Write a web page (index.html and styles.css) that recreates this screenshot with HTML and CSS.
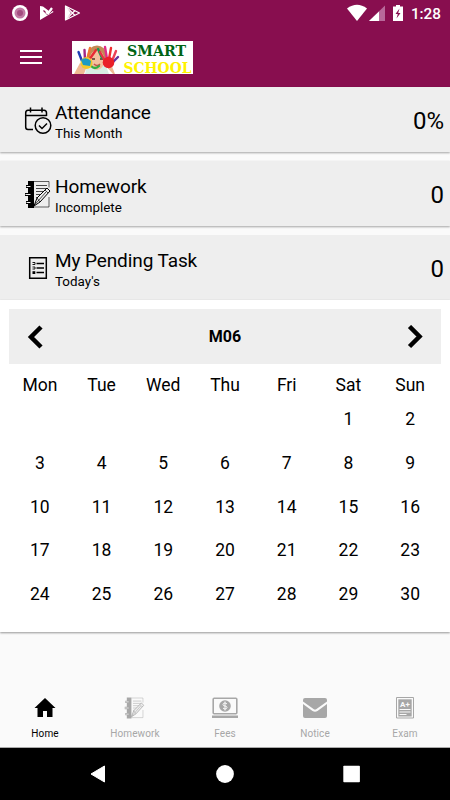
FILE: index.html
```html
<!DOCTYPE html>
<html lang="en">
<head>
    <meta charset="UTF-8">
    <meta name="viewport" content="width=device-width, initial-scale=1.0">
    <title>Smart School</title>
    <link rel="stylesheet" href="styles.css">
</head>
<body>
    <header class="app-header">
        <div class="status-bar">
            <svg class="status-left" width="70" height="18" viewBox="0 0 70 18">
                <circle cx="8" cy="9" r="8" fill="#fff"/>
                <circle cx="8" cy="9" r="5.500" fill="#c27ba5"/>
                <circle cx="8" cy="9" r="3" fill="#a34c80"/>
                <path d="M28 2l3 .5 6 4.500 2-3 2.500 4L28 16z" fill="#fff"/>
                <path d="M31.500 6.500l4 4L41 6" fill="none" stroke="#880e4f" stroke-width="1.200"/>
                <path d="M34 8l2 1.500L40 4" fill="none" stroke="#fff" stroke-width="2.200"/>
                <path d="M53.500 2v14L67.500 9z" fill="none" stroke="#fff" stroke-width="1.200" stroke-linejoin="round"/>
                <path d="M53.500 2v14l5.500-7z" fill="#fff"/>
                <path d="M54 2.500l9 9M54 15.500l9-9" stroke="#fff" stroke-width="1.200"/>
            </svg>
            <div class="status-right">
                <svg width="58" height="18" viewBox="0 0 58 18">
                    <path d="M0 4.500Q10 -3 20 4.500L10 17z" fill="#fff"/>
                    <path d="M22 17L38 1.500V17z" fill="#b8699a"/>
                    <path d="M22 17L32 7.500V17z" fill="#fff"/>
                    <path d="M46 2.500h3V1h4v1.500h3V17H46z" fill="#fff"/>
                    <path d="M52.500 4.500L48.500 10h2.300l-1.300 4.500 4-5.500h-2.300z" fill="#880e4f"/>
                </svg>
                <span class="clock">1:28</span>
            </div>
        </div>
        <div class="toolbar">
            <div class="menu-btn"><span></span><span></span><span></span></div>
            <svg class="logo" width="121" height="33" viewBox="0 0 121 33">
                <rect width="121" height="33" fill="#fff"/>
                <!-- child -->
                <path d="M13 33l2-8h19l3 8z" fill="#d8eee5"/>
                <ellipse cx="25" cy="14" rx="9.500" ry="9.500" fill="#c38a55"/>
                <ellipse cx="25" cy="19" rx="7.500" ry="10" fill="#f4c19f"/>
                <path d="M2 33l6-11 7 3-3 8zM41 33l-8-9 6-1 4 10z" fill="#efb993"/>
                <path d="M20 18h3M28 18h3" stroke="#533529" stroke-width="1.500"/>
                <path d="M22 23q3 3 6 0" fill="none" stroke="#c6504c" stroke-width="1.500"/>
                <!-- painted hands -->
                <g fill="none" stroke-width="2.400" stroke-linecap="round">
                    <path d="M10 20L6.500 11" stroke="#1f3eb4"/>
                    <path d="M13 19L12.500 9" stroke="#a12787"/>
                    <path d="M15 19l3-12" stroke="#f17631"/>
                    <path d="M17 19l7-10" stroke="#e92b35"/>
                    <path d="M26 8l4 9" stroke="#1a9651"/>
                    <path d="M33 20L28 11" stroke="#e73345"/>
                    <path d="M35 18L33 6" stroke="#e02c88"/>
                    <path d="M37 18l2-11" stroke="#f02d30"/>
                    <path d="M40 20l4-10" stroke="#ec4056"/>
                    <path d="M41 21l5-5" stroke="#65319d"/>
                    <path d="M19 25q4 4 8 0" stroke="#35ad43"/>
                </g>
                <circle cx="14.500" cy="22" r="6" fill="#f2c92b"/>
                <path d="M9 19q5-4 10 1l-1 5-7-1z" fill="#1b9bc4"/>
                <circle cx="36.500" cy="21.500" r="5.800" fill="#ea2029"/>
                <text class="logo-text green" x="55" y="14.500" textLength="59" lengthAdjust="spacingAndGlyphs">SMART</text>
                <text class="logo-text yellow" x="51.500" y="31.500" textLength="68" lengthAdjust="spacingAndGlyphs">SCHOOL</text>
            </svg>
        </div>
    </header>

    <!-- shared notebook icon -->
    <svg class="defs" width="0" height="0">
        <symbol id="notebook" viewBox="0 0 26 27">
            <path d="M3 0h6v27H3v-4H1v-3h2v-5H0v-3h3V7H1V4h2z" fill="currentColor"/>
            <path d="M1.500 5.500h4M.5 13.500h5M1.500 21.500h4" stroke="#eee" stroke-width="1"/>
            <path d="M9 .5h15v6M24 16v10H9" fill="none" stroke="currentColor" stroke-width=".6"/>
            <path d="M11 4.500h11M11 7.500h11M11 10.500h9M11 13.500h6M11 16.500h3" stroke="currentColor" stroke-width=".7"/>
            <path d="M9 25l3-8L22 7l3 3-10 11z" fill="#eee" stroke="currentColor" stroke-width="1"/>
            <path d="M12 17l3 4M20 9l3 3M9.500 24L21 11" stroke="currentColor" stroke-width=".7"/>
        </symbol>
    </svg>

    <main class="content">
        <section class="card">
            <svg class="card-icon" width="28" height="28" viewBox="0 0 28 28" fill="none" stroke="#000" stroke-width="1.500">
                <path d="M9 22.500H4Q1.700 22.500 1.700 20V6Q1.700 3.200 4 3.200H20Q22.500 3.200 22.500 6v3M1.700 8.500h21M6.500 .5v5M18 .5v5"/>
                <circle cx="19" cy="18.500" r="7.800"/>
                <path d="M15 18.500l3 3 5-5"/>
            </svg>
            <div class="card-text">
                <div class="card-title">Attendance</div>
                <div class="card-sub">This Month</div>
            </div>
            <div class="card-value">0%</div>
        </section>
        <section class="card">
            <svg class="card-icon" width="28" height="27"><use href="#notebook" x="1" width="26" height="27"/></svg>
            <div class="card-text">
                <div class="card-title">Homework</div>
                <div class="card-sub">Incomplete</div>
            </div>
            <div class="card-value">0</div>
        </section>
        <section class="card flat">
            <svg class="card-icon" width="28" height="24" viewBox="0 0 28 24">
                <path d="M5.700 .7h16.600v20.600H5.700z" fill="none" stroke="#000" stroke-width="1.500"/>
                <path d="M12.500 6.500H20M12.500 11H20M12.500 15.500H20" stroke="#000" stroke-width="1.300"/>
                <path d="M8.500 5.500h2.500v2H8.500M8.500 10H11v2H8.500" fill="none" stroke="#000" stroke-width=".9"/>
                <path d="M8.500 14.200H11.300V17H8.500z"/>
            </svg>
            <div class="card-text">
                <div class="card-title">My Pending Task</div>
                <div class="card-sub">Today's</div>
            </div>
            <div class="card-value">0</div>
        </section>

        <section class="calendar">
            <div class="month-bar">
                <svg width="16" height="24" viewBox="0 0 16 24"><path d="M14 2L4 12l10 10" fill="none" stroke="#000" stroke-width="4.500"/></svg>
                <span>M06</span>
                <svg width="16" height="24" viewBox="0 0 16 24"><path d="M2.500 1.500l10 10-10 10" fill="none" stroke="#000" stroke-width="4.500"/></svg>
            </div>
            <div class="weekdays">
                <span>Mon</span><span>Tue</span><span>Wed</span><span>Thu</span><span>Fri</span><span>Sat</span><span>Sun</span>
            </div>
            <div class="days">
                <span class="first">1</span><span>2</span>
                <span>3</span><span>4</span><span>5</span><span>6</span><span>7</span><span>8</span><span>9</span>
                <span>10</span><span>11</span><span>12</span><span>13</span><span>14</span><span>15</span><span>16</span>
                <span>17</span><span>18</span><span>19</span><span>20</span><span>21</span><span>22</span><span>23</span>
                <span>24</span><span>25</span><span>26</span><span>27</span><span>28</span><span>29</span><span>30</span>
            </div>
        </section>
    </main>

    <nav class="tabs">
        <div class="tab active">
            <svg width="26" height="24" viewBox="0 0 26 24"><path d="M13 2L2.500 12H5.500v9h5.500v-6h4v6h5.500v-9h3z" fill="currentColor"/></svg>
            <span>Home</span>
        </div>
        <div class="tab">
            <svg width="26" height="24"><use href="#notebook" x="2.500" y="1" width="20" height="22"/></svg>
            <span>Homework</span>
        </div>
        <div class="tab">
            <svg width="28" height="24" viewBox="0 0 28 24">
                <rect x="2.200" y="2.200" width="23.600" height="15.600" rx="1" fill="none" stroke="currentColor" stroke-width="1.600"/>
                <path d="M1 19.500h26v2.500H1z" fill="currentColor"/>
                <circle cx="14" cy="10" r="5.800" fill="currentColor"/>
                <path d="M16 8q-1-1-2-1-2 0-2 1.500T14 10t2 1.500-2 1.500q-1 0-2-1M14 5.500v9" fill="none" stroke="#fafafa" stroke-width="1"/>
            </svg>
            <span>Fees</span>
        </div>
        <div class="tab">
            <svg width="26" height="24" viewBox="0 0 26 24">
                <path d="M3 2h20q2 0 2 2v1.500L14.500 13q-1.500 1-3 0L1 5.500V4q0-2 2-2z" fill="currentColor"/>
                <path d="M1 8l9.500 7q2.500 1.500 5 0L25 8v12q0 2-2 2H3q-2 0-2-2z" fill="currentColor"/>
            </svg>
            <span>Notice</span>
        </div>
        <div class="tab">
            <svg width="26" height="24" viewBox="0 0 26 24">
                <path d="M4.500 1.500h17v20.500h-17z" fill="none" stroke="currentColor" stroke-width="1"/>
                <path d="M6.300 3.300h13.400v17.200H6.300z" fill="currentColor"/>
                <text class="grade" x="8" y="10.500">A+</text>
                <path d="M7.500 13.500h11M7.500 16h11M7.500 18.500h7" stroke="#fafafa" stroke-width="1"/>
            </svg>
            <span>Exam</span>
        </div>
    </nav>

    <div class="system-nav">
        <svg width="18" height="20" viewBox="0 0 18 20"><path d="M2 10L15.500 2v16z" fill="#fff" stroke="#fff" stroke-linejoin="round"/></svg>
        <svg width="18" height="20" viewBox="0 0 18 20"><circle cx="9" cy="10" r="8.900" fill="#fff"/></svg>
        <svg width="18" height="20" viewBox="0 0 18 20"><rect x=".3" y="1.700" width="16.600" height="16.600" rx=".8" fill="#fff"/></svg>
    </div>
</body>
</html>
```

FILE: styles.css
```css
* {
    box-sizing: border-box;
}
body {
    font-family: Roboto, sans-serif;
    margin: 0;
    width: 450px;
    height: 800px;
    display: flex;
    flex-direction: column;
    overflow: hidden;
    background: #fafafa;
    color: #000;
}
svg {
    display: block;
    flex-shrink: 0;
}
.defs {
    position: absolute;
}

/* Header */
.app-header {
    height: 87px;
    background: #880e4f;
}
.status-bar {
    height: 27px;
    display: flex;
    justify-content: space-between;
    padding: 4px 9px 0 12px;
}
.status-right {
    display: flex;
    gap: 6px;
}
.clock {
    color: #fff;
    font-size: 15.3px;
    font-weight: 500;
    line-height: 20px;
}
.toolbar {
    display: flex;
    align-items: center;
    height: 60px;
    padding-left: 20px;
}
.menu-btn {
    width: 22px;
    margin-right: 30px;
    display: flex;
    flex-direction: column;
    gap: 4px;
}
.menu-btn span {
    height: 2px;
    background: #fff;
}
.logo {
    overflow: visible;
}
.logo-text {
    font-family: "DejaVu Serif", serif;
    font-weight: bold;
    font-size: 14px;
}
.green {
    fill: #006414;
}
.yellow {
    fill: #fff200;
}

/* Summary cards */
.content {
    flex: 1;
}
.card {
    height: 65px;
    margin-bottom: 9px;
    padding: 0 6px 0 24px;
    display: flex;
    align-items: center;
    background: #eee;
    box-shadow: 0 1px 2px rgba(0,0,0,0.35);
}
.card.flat {
    margin-bottom: 0;
    box-shadow: none;
}
.card-icon {
    margin-top: 2px;
}
.card-text {
    flex: 1;
    margin-left: 3px;
    padding-top: 4px;
}
.card-title {
    font-size: 19px;
    line-height: 23px;
    letter-spacing: -0.1px;
}
.card-sub {
    font-size: 13.4px;
    line-height: 19px;
}
.card-value {
    font-size: 24px;
    padding-top: 3px;
}

/* Calendar */
.calendar {
    height: 332px;
    padding: 9px 9px 0;
    background: #fff;
    box-shadow: 0 1px 2px rgba(0,0,0,0.4);
}
.month-bar {
    height: 55px;
    padding: 0 18px;
    display: flex;
    align-items: center;
    justify-content: space-between;
    background: #eee;
    font-size: 16px;
    font-weight: bold;
}
.weekdays, .days {
    display: grid;
    grid-template-columns: repeat(7, 1fr);
    text-align: center;
    font-size: 17.5px;
}
.weekdays {
    line-height: 42px;
    height: 34px;
}
.days {
    grid-auto-rows: 43.8px;
    line-height: 43.8px;
}
.days .first {
    grid-column: 6;
}

/* Bottom tabs */
.tabs {
    height: 61px;
    display: grid;
    grid-template-columns: repeat(5, 1fr);
    border-bottom: 1px solid #aaa;
}
.tab {
    display: flex;
    flex-direction: column;
    align-items: center;
    padding-top: 9px;
    gap: 8px;
    color: #a7a7a7;
    font-size: 10px;
    line-height: 12px;
    letter-spacing: 0.1px;
}
.tab.active {
    color: #000;
}
.grade {
    font-size: 8px;
    font-weight: bold;
    letter-spacing: 0;
    fill: #fafafa;
}

.system-nav {
    height: 52px;
    background: #000;
    display: flex;
    justify-content: center;
    align-items: center;
    gap: 109px;
}
```
